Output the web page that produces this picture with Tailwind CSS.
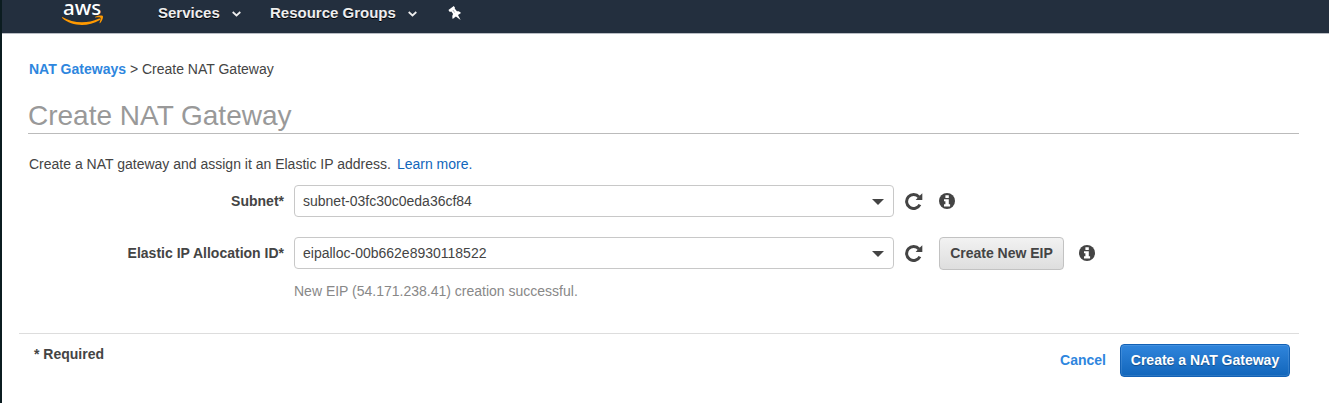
<!DOCTYPE html>
<html lang="en">
<head>
<meta charset="utf-8">
<title>Create NAT Gateway</title>
<script src="https://cdn.jsdelivr.net/npm/@tailwindcss/browser@4"></script>
</head>
<body class="h-[403px] w-[1329px] overflow-hidden border-l-2 border-[#0b1c20] bg-white font-['Liberation_Sans',Arial,sans-serif] text-[14px] leading-4 text-[#444]">
<svg class="hidden">
  <symbol id="refresh" viewBox="0 0 18 18"><path d="M14 5A7 7 0 1 0 14.9 12.6" fill="none" stroke="#444" stroke-width="3"/><path d="M17.3 1.2V8H10.6L13 5.4 15.2 3.2Z" fill="#444"/></symbol>
  <symbol id="info" viewBox="0 0 16 16"><circle cx="8" cy="8" r="8" fill="#444"/><path d="M6.4 2.2H9.8V5.1H6.4ZM5 6.2H9.8V11.2H11.1V13.4H5V11.2H6.4V8.3H5Z" fill="#fff"/></symbol>
  <symbol id="chevron" viewBox="0 0 9 6"><path d="M.7 1 4.5 4.5 8.3 1" fill="none" stroke="#eee" stroke-width="1.7"/></symbol>
</svg>
<header class="flex h-[34px] border-b border-[#b9bdc4] bg-[#232f3e] text-[15px] font-bold text-[#eee] [text-shadow:0_1px_0_#000]">
  <div class="ml-[60px] w-[96px]">
    <div class="h-[14px] pl-[1px] font-['Noto_Sans',sans-serif] text-[20.5px] leading-[14px] font-medium text-white [text-shadow:none]">aws</div>
    <svg class="h-[12px] w-[42px]" viewBox="0 0 42 12"><path d="M.3 3.1C11 9.5 25 10 36.6 4.8C38.3 4.1 39 5.5 37.5 6.3C26 13.1 9.5 12.6.2 4Q-.2 3.2.3 3.1Z" fill="#f90"/><path d="M33.3 2.8C35.4 1.6 40 1.2 40.8 2C41.5 3 40.2 7.2 38.2 9C37.7 9.4 37.4 9.2 37.6 8.6C38.1 7.1 39 4.5 38.5 3.8C38 3.1 35.2 3.3 33.6 3.5C33 3.5 32.8 3.1 33.3 2.8Z" fill="#f90"/></svg>
  </div>
  <div class="flex w-[112px] pt-[5px]"><span class="w-[74px]">Services</span><svg class="mt-[6px] h-[6px] w-[9px]"><use href="#chevron"/></svg></div>
  <div class="flex w-[178px] pt-[5px]"><span class="w-[138px]">Resource Groups</span><svg class="mt-[6px] h-[6px] w-[9px]"><use href="#chevron"/></svg></div>
  <svg class="mt-[6px] h-[14px] w-[14px]" viewBox="0 0 14 14"><path d="M.4 4 5.8 0 7 1.8 6.7 2.5 8.9 5.3C10.2 4.8 11.8 5.4 13 6.9L10 9.1 12.6 14 7.9 10.6 4.7 13C4 11 4.3 9.2 5.1 8.1L3.3 5.5 1.8 5.9Z" fill="#fff"/><path d="m4.9 4 1.8 2.6" stroke="#232f3e" stroke-width=".4"/></svg>
</header>
<main>
  <nav class="ml-[27px] pt-[27px]"><a class="font-bold text-[#2e86de]">NAT Gateways</a> &gt; Create NAT Gateway</nav>
  <h1 class="mt-[19px] ml-[26px] h-[38px] w-[1271px] border-b border-[#bbb] text-[28px] leading-[40px] text-[#999]">Create NAT Gateway</h1>
  <p class="mt-[22px] ml-[27px]">Create a NAT gateway and assign it an Elastic IP address.<a class="ml-[6px] text-[#1166bb]">Learn more.</a></p>
  <div class="mt-[13px] flex h-8 items-center">
    <label class="w-[282px] text-right font-bold">Subnet*</label>
    <div class="ml-[10px] flex h-8 w-[600px] items-center justify-between rounded border border-[#c8c8c8] pr-[9px] pl-2"><span>subnet-03fc30c0eda36cf84</span><svg class="mt-[2px] h-[6px] w-[12px]"><path d="M0 0H12L6 6Z" fill="#444"/></svg></div>
    <svg class="ml-[11px] h-[18px] w-[18px]"><use href="#refresh"/></svg>
    <svg class="ml-[16px] h-4 w-4"><use href="#info"/></svg>
  </div>
  <div class="mt-5 flex h-8 items-center">
    <label class="w-[282px] text-right font-bold">Elastic IP Allocation ID*</label>
    <div class="ml-[10px] flex h-8 w-[600px] items-center justify-between rounded border border-[#c8c8c8] pr-[9px] pl-2"><span>eipalloc-00b662e8930118522</span><svg class="mt-[2px] h-[6px] w-[12px]"><path d="M0 0H12L6 6Z" fill="#444"/></svg></div>
    <svg class="ml-[11px] h-[18px] w-[18px]"><use href="#refresh"/></svg>
    <button class="mt-px ml-[16px] h-[33px] w-[125px] shrink-0 rounded border border-[#c2c2c2] bg-linear-to-b from-[#f2f2f2] to-[#dedede] pb-px font-bold whitespace-nowrap">Create New EIP</button>
    <svg class="ml-[15px] h-4 w-4"><use href="#info"/></svg>
  </div>
  <p class="mt-[14px] ml-[292px] text-[#888]">New EIP (54.171.238.41) creation successful.</p>
  <footer class="mt-[34px] ml-[17px] flex w-[1280px] border-t border-[#ddd]">
    <strong class="mt-[12px] ml-[15px] flex-1">* Required</strong>
    <a class="mt-[18px] mr-[14px] font-bold text-[#2e86de]">Cancel</a>
    <button class="mt-[10px] mr-[9px] h-[33px] w-[170px] rounded border border-[#1261b5] bg-linear-to-b from-[#2f85dc] to-[#1166bb] pb-px font-bold whitespace-nowrap text-white shadow-[inset_0_0_0_1px_rgba(255,255,255,0.1)] [text-shadow:0_1px_1px_#0005]">Create a NAT Gateway</button>
  </footer>
</main>
</body>
</html>
